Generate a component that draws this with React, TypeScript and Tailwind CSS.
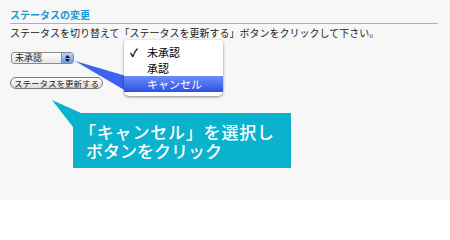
import React from "react";

export default function App() {
  return (
    <div className="relative w-[450px] h-[200px] overflow-hidden bg-[#f7f7f7] font-['Noto_Sans_CJK_JP',sans-serif] text-[#222]">
      <div className="pl-[10px] pr-[12px] pt-[8px]">
        <h2 className="text-[10px] font-bold leading-[14px] pb-[1px] text-[#1a9ad6] border-b border-[#b0b0b0]">
          ステータスの変更
        </h2>
        <p className="mt-[2px] text-[10px] leading-[14px] whitespace-nowrap">
          ステータスを切り替えて「ステータスを更新する」ボタンをクリックして下さい。
        </p>
        <div className="mt-[12px] ml-[1px] flex h-[12px] w-[63px] items-stretch overflow-hidden rounded-[3px] border border-[#8a8a8a] bg-gradient-to-b from-white to-[#e4e4e4]">
          <span className="flex-1 pl-[3px] text-[9px] leading-[10px]">未承認</span>
          <span className="flex w-[12px] flex-col items-center justify-center gap-[1px] border-l border-[#6b8fc8] bg-gradient-to-b from-[#b9d2f5] to-[#6f9ae0]">
            <svg width="5" height="3" viewBox="0 0 5 3"><polygon points="2.5,0 5,3 0,3" fill="#111" /></svg>
            <svg width="5" height="3" viewBox="0 0 5 3"><polygon points="0,0 5,0 2.5,3" fill="#111" /></svg>
          </span>
        </div>
        <button className="mt-[13px] flex h-[12px] w-[93px] items-center justify-center rounded-full border border-[#7a7a7a] bg-gradient-to-b from-white to-[#dcdcdc] text-[8.5px] leading-[10px] text-[#222]">
          ステータスを更新する
        </button>
      </div>

      <svg className="absolute left-0 top-0" width="450" height="200" viewBox="0 0 450 200">
        <polygon points="75,61 126,76 126,91" fill="#3d63ee" />
      </svg>

      <div className="absolute left-[124px] top-[40px] w-[99px] rounded-t-[3px] rounded-b-[5px] bg-white py-[4px] shadow-[0_1px_3px_rgba(0,0,0,0.45)]">
        <div className="relative h-[16px] pl-[23px] text-[11px] leading-[16px] text-black">
          <span className="absolute left-[6px] top-0 font-bold">✓</span>
          未承認
        </div>
        <div className="h-[16px] pl-[23px] text-[11px] leading-[16px] text-black">承認</div>
        <div className="h-[16px] pl-[23px] text-[11px] leading-[16px] text-white bg-gradient-to-b from-[#6e8cf6] to-[#2e4fe6]">
          キャンセル
        </div>
      </div>

      <svg className="absolute left-0 top-0" width="450" height="200" viewBox="0 0 450 200">
        <polygon points="52,100 81,113 73,127" fill="#0ab2ce" />
      </svg>
      <div className="absolute left-[73px] top-[113px] h-[55px] w-[218px] bg-[#0ab2ce] pl-[13px] pt-[9px] text-[17px] font-medium leading-[19px] text-white">
        <div className="-ml-[7px] whitespace-nowrap tracking-[0.8px]">「キャンセル」を選択し</div>
        <div className="whitespace-nowrap">ボタンをクリック</div>
      </div>
    </div>
  );
}
